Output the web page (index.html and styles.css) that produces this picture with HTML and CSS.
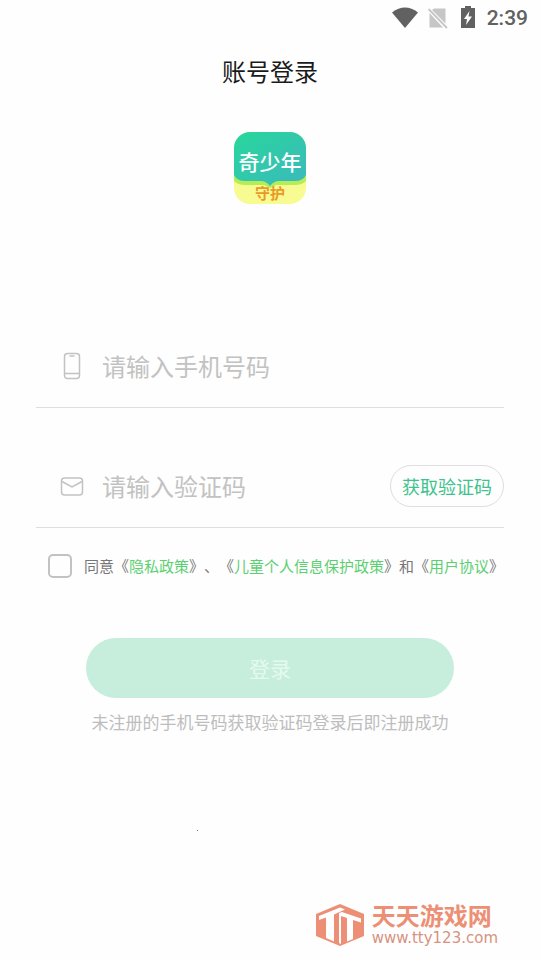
FILE: index.html
```html
<!DOCTYPE html>
<html lang="zh-CN">
<head>
<meta charset="utf-8">
<meta name="viewport" content="width=device-width, initial-scale=1">
<title>账号登录</title>
<link rel="stylesheet" href="styles.css">
</head>
<body>
<header class="status">
  <svg width="26" height="24" viewBox="0 0 26 24" aria-hidden="true"><path d="M0 6.500Q13-3.500 26 6.500L13 22Z" fill="#616161"/></svg>
  <svg width="22" height="24" viewBox="0 0 22 24" aria-hidden="true"><path d="M7 2.500H18.500V17.500L5 4ZM2.500 7L16 21.500H2.500Z" fill="#c6c6c6"/><path d="M1.500 3L20 22" stroke="#c6c6c6" stroke-width="1.800"/></svg>
  <svg class="battery" width="16" height="24" viewBox="0 0 16 24" aria-hidden="true"><path d="M1 2H5V0H11V2H15V22H1Z" fill="#616161"/><path d="M9.500 5L4 13H7L6 19L12 10.500H8.500Z" fill="#fff"/></svg>
  <span class="clock">2:39</span>
</header>
<main class="page">
  <h1 class="title">账号登录</h1>
  <svg class="logo" width="72" height="72" viewBox="0 0 72 72" role="img" aria-label="奇少年守护">
    <defs>
      <linearGradient id="green" x1="0" y1="0" x2="1" y2="1"><stop offset="0" stop-color="#28d79b"/><stop offset="1" stop-color="#3bb9bd"/></linearGradient>
      <clipPath id="tile"><rect width="72" height="72" rx="16"/></clipPath>
    </defs>
    <g clip-path="url(#tile)">
      <rect width="72" height="72" fill="#f8fb91"/>
      <path d="M0 42H72V49Q68 53 61 53H42L36 56L30 53H11Q4 53 0 49Z" fill="#b4ed55"/>
      <path d="M0 0H72V43Q69 49 61 49H45Q40 49 36 54Q32 49 27 49H11Q3 49 0 43Z" fill="url(#green)"/>
    </g>
    <text class="logo-name" x="36" y="38" text-anchor="middle">奇少年</text>
    <text class="logo-tag" x="36" y="67" text-anchor="middle">守护</text>
  </svg>
  <form class="form">
    <div class="field">
      <label class="field-icon" for="phone" aria-label="手机号码"><svg width="24" height="28" viewBox="0 0 24 28" fill="none" stroke="#c2c2c2" stroke-width="1.500"><rect x="4.500" y="1.500" width="15" height="25" rx="3"/><path d="M4.500 21.500H19.500M9.500 4H14.500"/></svg></label>
      <input class="field-input" id="phone" type="tel" placeholder="请输入手机号码">
    </div>
    <div class="field">
      <label class="field-icon" for="code" aria-label="验证码"><svg width="24" height="28" viewBox="0 0 24 28" fill="none" stroke="#c2c2c2" stroke-width="1.500"><rect x="1.500" y="6" width="21" height="17" rx="3"/><path d="M2 9.500L12 15L22 9.500"/></svg></label>
      <input class="field-input" id="code" type="text" placeholder="请输入验证码">
      <button class="code-button" type="button">获取验证码</button>
    </div>
    <div class="agreement">
      <input class="check" id="agree" type="checkbox">
      <label for="agree">同意《<a href="#privacy">隐私政策</a>》、《<a href="#children">儿童个人信息保护政策</a>》和《<a href="#terms">用户协议</a>》</label>
    </div>
    <button class="login" type="submit" disabled>登录</button>
    <p class="hint">未注册的手机号码获取验证码登录后即注册成功</p>
  </form>
  <i class="speck"></i>
</main>
<footer class="site">
  <svg width="50" height="44" viewBox="0 0 50 44" aria-hidden="true">
    <path d="M25 1L49 11V33L25 43L1 33V11Z" fill="#ed8f75"/>
    <path d="M4 13L25 4.500L30 6.500L19 11.500V38.500L11 35V14.500L4 17Z" fill="#fff"/>
    <path d="M24 10L27 9L46 15.500V19.500L38 17V36L32 38.500V15L26 13V41L24 40Z" fill="#fff"/>
  </svg>
  <div class="site-text"><strong class="site-name">天天游戏网</strong><span class="site-url">www.tty123.com</span></div>
</footer>
</body>
</html>
```
FILE: styles.css
```css
* { box-sizing: border-box; }
body {
  margin: 0;
  min-height: 100vh;
  display: flex;
  flex-direction: column;
  background: #fefefe;
  color: #1a1a1a;
  font-family: "Noto Sans CJK SC", sans-serif;
}
button, input { font: inherit; }
.status {
  display: flex;
  justify-content: flex-end;
  align-items: center;
  gap: 9px;
  height: 36px;
  padding-right: 12px;
}
.battery { margin: 0 2px; }
.clock {
  font: 500 21px/24px Roboto, sans-serif;
  color: #616161;
}
.page { display: flex; flex-direction: column; }
.title {
  margin: 0;
  font-size: 24px;
  font-weight: 400;
  line-height: 70px;
  text-align: center;
}
.logo { align-self: center; margin-top: 26px; }
.logo-name { font-size: 21px; font-weight: 500; fill: #fff; }
.logo-tag { font-size: 15px; font-weight: 700; fill: #e99a25; }
.form {
  display: flex;
  flex-direction: column;
  margin-top: 120px;
  padding: 0 36px;
}
.field {
  display: flex;
  align-items: center;
  height: 84px;
  padding-left: 24px;
  border-bottom: 1px solid #dedede;
}
.field + .field { margin-top: 36px; }
.field-icon { display: flex; margin-right: 18px; }
.field-input {
  flex: 1;
  min-width: 0;
  padding: 0;
  border: 0;
  outline: 0;
  background: none;
  font-size: 24px;
}
.field-input::placeholder { color: #c2c2c2; opacity: 1; }
.code-button {
  height: 42px;
  padding: 0 11px;
  border: 1px solid #dedede;
  border-radius: 21px;
  background: #fefefe;
  color: #40c28d;
  font-size: 18px;
  line-height: 24px;
}
.agreement {
  display: flex;
  align-items: center;
  gap: 12px;
  margin-top: 26px;
  padding-left: 12px;
  color: #777;
  font-size: 15px;
  line-height: 24px;
  white-space: nowrap;
  text-spacing-trim: space-all;
}
.agreement a { color: #5bd070; text-decoration: none; }
.check {
  appearance: none;
  width: 24px;
  height: 24px;
  margin: 0;
  border: 2px solid #c2c2c2;
  border-radius: 5px;
}
.login {
  height: 60px;
  margin: 60px 50px 0;
  border: 0;
  border-radius: 30px;
  background: #c7eedd;
  color: #e5faef;
  font-size: 21px;
}
.hint {
  margin: 12px 0 0;
  color: #bdbdbd;
  font-size: 17px;
  line-height: 24px;
  text-align: center;
}
.speck {
  width: 1px;
  height: 1px;
  margin: 96px 0 0 197px;
  background: #777;
}
.site {
  display: flex;
  justify-content: flex-end;
  align-items: center;
  gap: 7px;
  margin-top: auto;
  padding: 0 42px 12px 0;
  color: #ed8f75;
}
.site-text { display: flex; flex-direction: column; }
.site-name { font-size: 24px; font-weight: 700; line-height: 26px; }
.site-url { color: #d79380; font: 15px/20px "DejaVu Sans", sans-serif; }
```
